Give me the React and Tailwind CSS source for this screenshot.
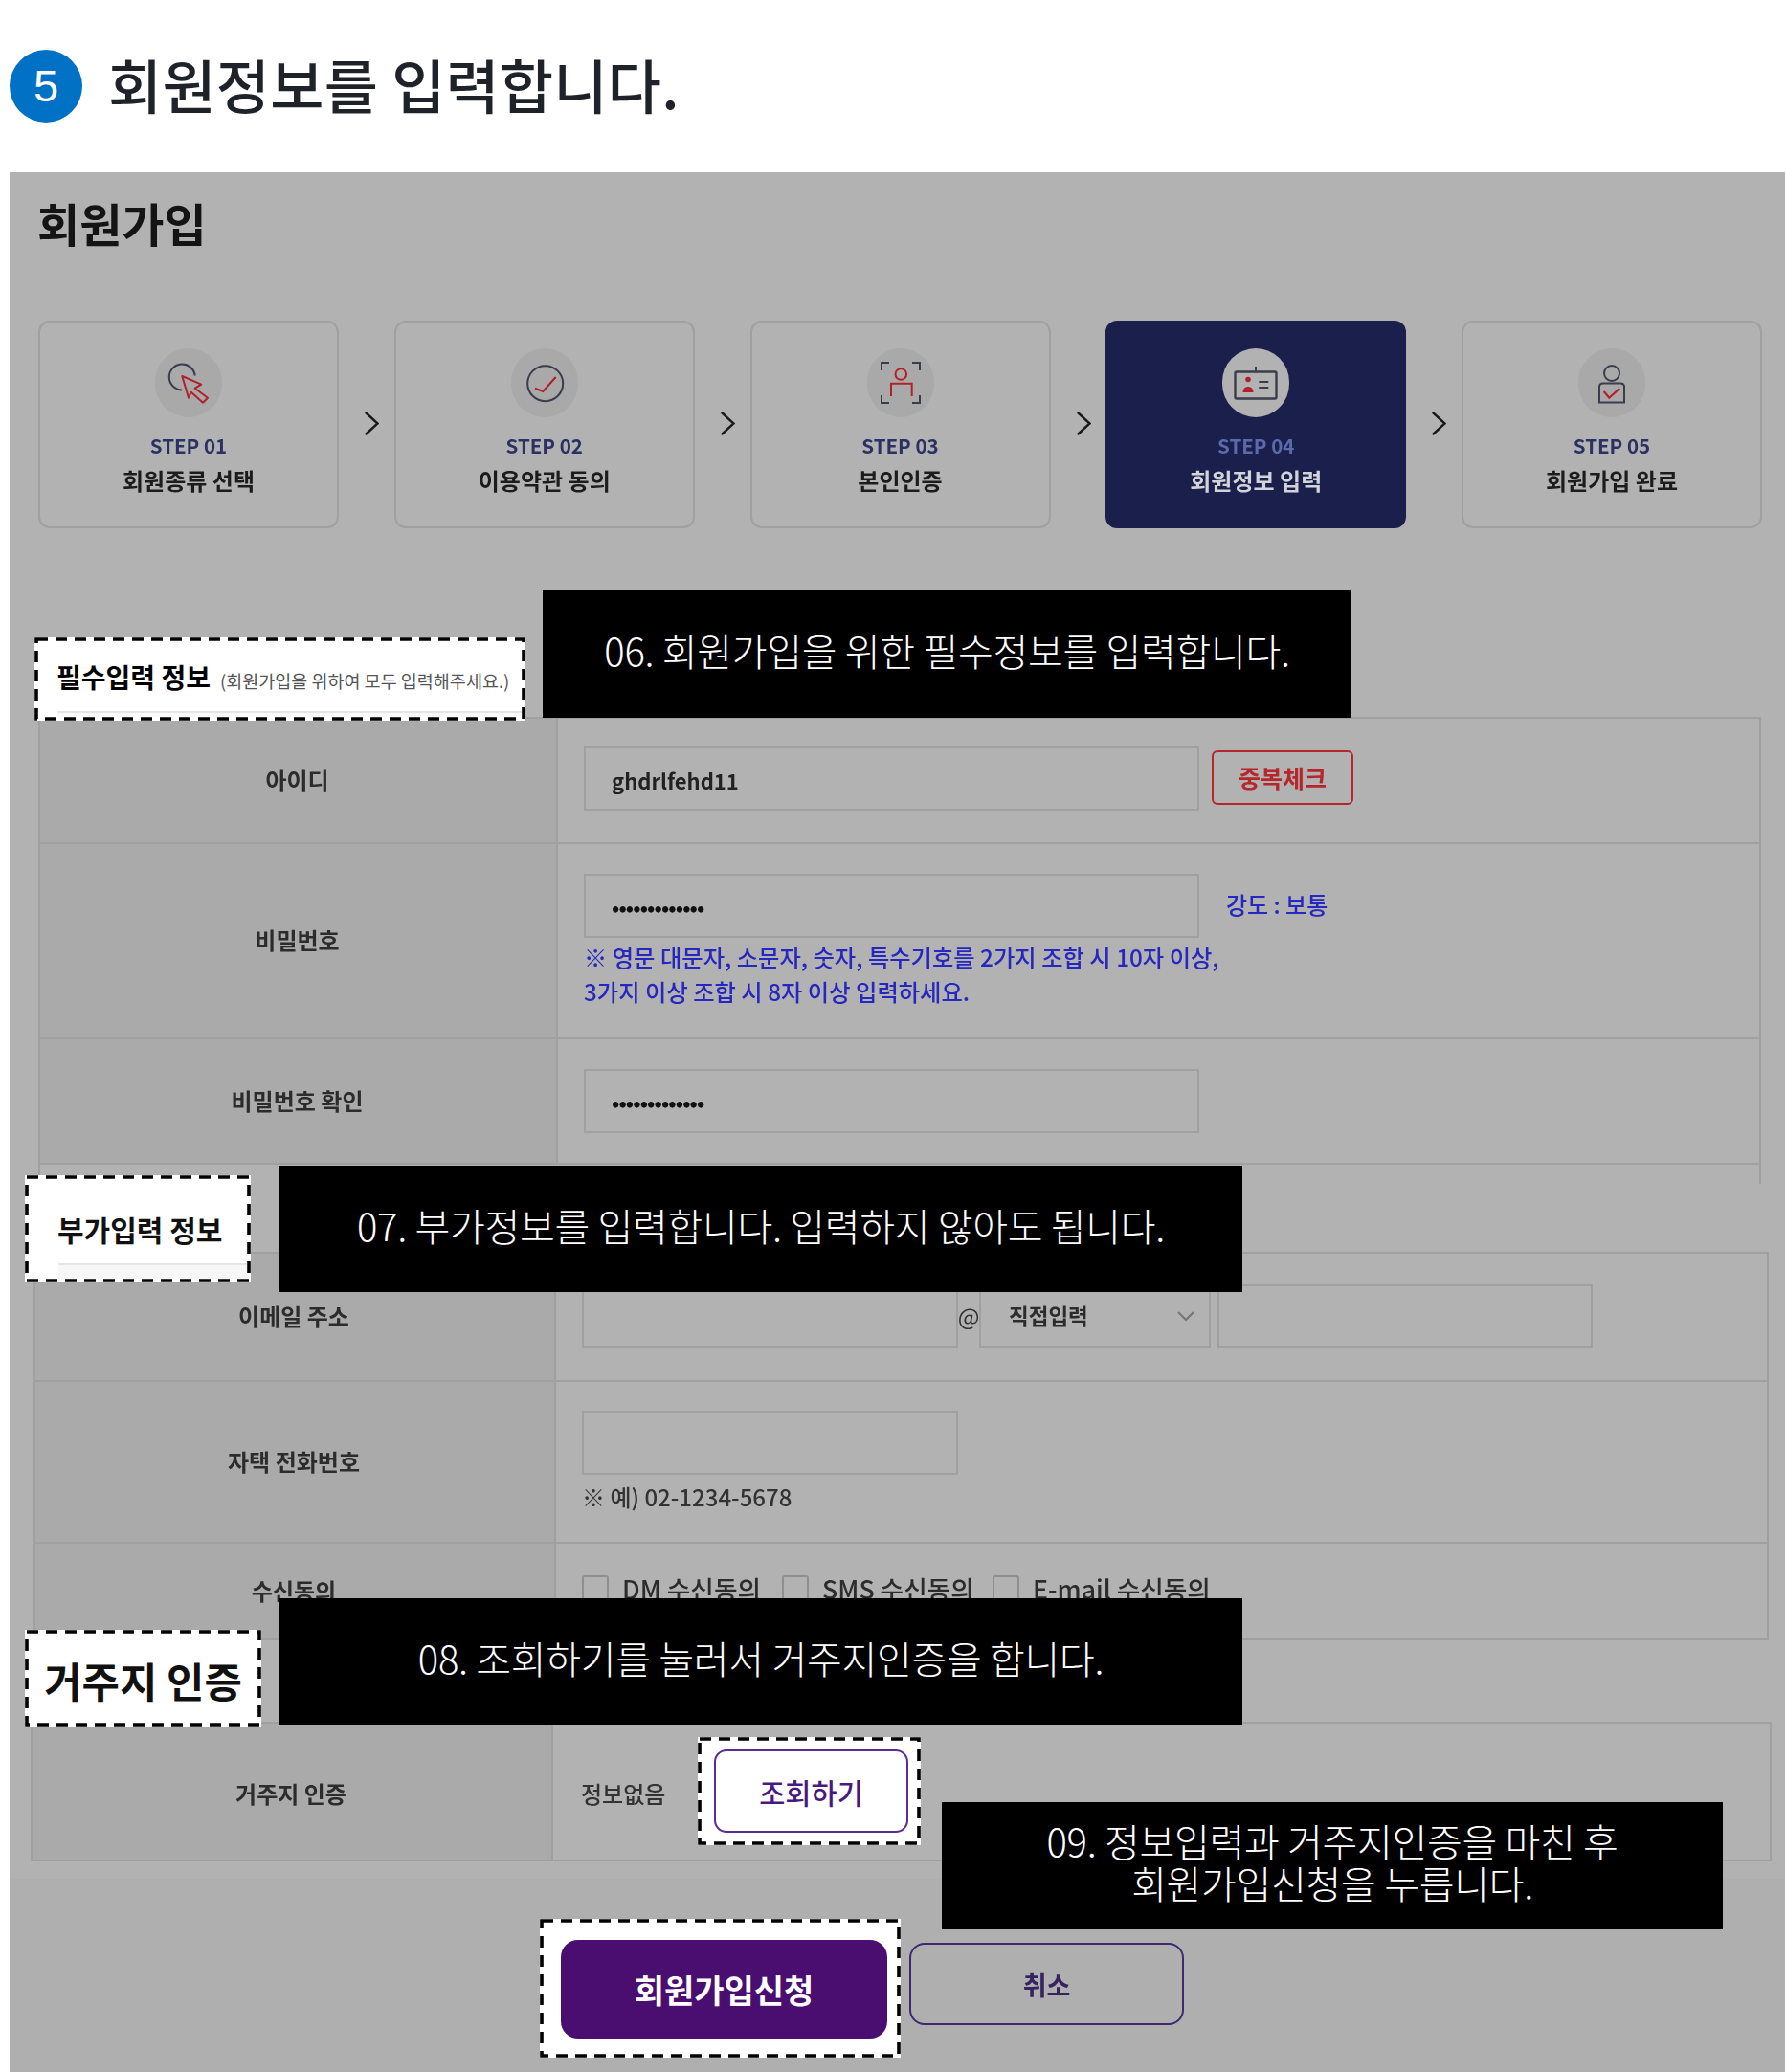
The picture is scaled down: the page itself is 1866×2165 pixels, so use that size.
import React from "react";

const FONT = "font-['Noto_Sans_CJK_KR','Noto_Sans',sans-serif]";

function Chevron() {
  return (
    <svg width="15" height="25" viewBox="0 0 15 25" fill="none" stroke="#1a1a1a" strokeWidth="2.4" strokeLinecap="round">
      <path d="M1.5 1.5 L13.5 12.5 L1.5 23.5" />
    </svg>
  );
}

const DARK = "#3a3d4c";
const RED = "#b3202a";

function Icon({ n }) {
  return (
    <svg width="70" height="72" viewBox="0 0 70 72" fill="none" strokeWidth="2">
      {n === 1 && (
        <>
          <path d="M28 43.5 A13.5 13.5 0 1 1 41.7 28.5" stroke={DARK} />
          <path d="M28.3 29 L48.3 37.7 L41.7 41.7 L55 51.7 L50 56.7 L37.7 45.7 L35 51.7 Z" stroke={RED} strokeLinejoin="round" />
        </>
      )}
      {n === 2 && (
        <>
          <circle cx="35.7" cy="36.7" r="18.5" stroke={DARK} />
          <path d="M25 41.7 L33.3 45 L46.7 30" stroke={RED} />
        </>
      )}
      {n === 3 && (
        <>
          <path d="M15 23 V15 H23 M47 15 H55 V23 M15 49 V57 H23 M47 57 H55 V49" stroke={DARK} />
          <circle cx="35.3" cy="27" r="5.8" stroke={RED} />
          <path d="M25 50 V36.7 H46.7 V50" stroke={RED} />
        </>
      )}
      {n === 4 && (
        <>
          <path d="M35 24 V19" stroke={DARK} />
          <rect x="13.5" y="24.5" width="43" height="28" rx="1.5" stroke={DARK} strokeWidth="2.4" />
          <circle cx="27" cy="32.5" r="2.8" fill={RED} stroke="none" />
          <path d="M21.5 46 C21.5 38 32.5 38 32.5 46 Z" fill={RED} stroke="none" />
          <path d="M38.3 35 H48.3 M38.3 41 H48.3" stroke={DARK} />
        </>
      )}
      {n === 5 && (
        <>
          <circle cx="35" cy="26" r="8" stroke={DARK} />
          <path d="M26 36.5 H44 Q48 36.5 48 40 V56.5 H22 V40 Q22 36.5 26 36.5 Z" stroke={DARK} />
          <path d="M26.7 45 L32.3 51.7 L43.3 41.7" stroke={RED} strokeWidth="2.2" />
        </>
      )}
    </svg>
  );
}

function Step({ n, title, active }) {
  return (
    <div
      className={
        "w-[314px] h-[217px] rounded-[12px] flex flex-col items-center " +
        (active ? "bg-[#1b1f4b]" : "border-2 border-[#a0a0a0]")
      }
    >
      <div
        className={
          "w-[70px] h-[72px] rounded-full flex items-center justify-center " +
          (active ? "mt-[29px] bg-[#b2b2b2]" : "mt-[27px] bg-[#a9a9a9]")
        }
      >
        <Icon n={n} />
      </div>
      <div
        className={
          "mt-[15px] leading-[28px] text-[20.5px] font-bold " +
          (active ? "text-[#5a6bab]" : "text-[#2a3263]")
        }
      >
        STEP 0{n}
      </div>
      <div
        className={
          "mt-[6px] leading-[34px] text-[24px] font-bold " +
          (active ? "text-[#d2d3d8]" : "text-[#1c1c1c]")
        }
      >
        {title}
      </div>
    </div>
  );
}

function Sep() {
  return (
    <div className="w-[57.75px] pl-[27px] pb-[2px] flex items-center">
      <Chevron />
    </div>
  );
}

function Label({ className, children }) {
  return (
    <div className={"shrink-0 h-full bg-[#aaaaaa] border-r-2 border-[#a0a0a0] flex items-center justify-center pb-[2px] pr-[2px] text-[24px] font-bold text-[#2c2c2c] " + className}>
      {children}
    </div>
  );
}

function Field({ className, children }) {
  return (
    <div className={"border-2 border-[#a0a0a0] flex items-center shrink-0 " + className}>{children}</div>
  );
}

const Dots = () => (
  <span className="pl-[27px] text-[22px] leading-none tracking-[-0.9px] text-[#111] font-bold">•••••••••••••</span>
);

function Dashed({ className, w, h, children }) {
  return (
    <div className={"absolute bg-white " + className}>
      <svg className="absolute left-0 top-0" width={w} height={h} fill="none">
        <rect x="2" y="2" width={w - 4} height={h - 4} stroke="#000" strokeWidth="3.6" strokeDasharray="12 8" />
      </svg>
      {children}
    </div>
  );
}

function Note({ className, children }) {
  return (
    <div className={"absolute bg-black text-white text-center flex flex-col justify-center pb-[9px] text-[40px] leading-[44px] font-light tracking-[-0.3px] " + className}>
      {children}
    </div>
  );
}

function Check({ children, className }) {
  return (
    <div className={"flex items-center " + className}>
      <span className="w-[28px] h-[30px] rounded-[3px] border-2 border-[#8f8f8f] shrink-0" />
      <span className="ml-[14px] mb-[2px] text-[26.7px] leading-[28px] text-[#2c2c2c] font-medium">{children}</span>
    </div>
  );
}

export default function App() {
  return (
    <div className={"relative w-[1866px] h-[2165px] bg-white overflow-hidden " + FONT}>
      {/* Heading */}
      <div className="h-[180px] pl-[10px] flex items-center">
        <div className="w-[76px] h-[76px] rounded-full bg-[#0071c5] text-white flex items-center justify-center text-[47px] font-['Liberation_Sans',sans-serif]">
          5
        </div>
        <h1 className="ml-[27px] mb-[4px] text-[61px] leading-[76px] font-medium tracking-[0.3px] text-[#1f2329]">회원정보를 입력합니다.</h1>
      </div>

      {/* Dimmed page */}
      <div className="ml-[10px] w-[1855px] h-[1985px] bg-[#b2b2b2] flex flex-col blur-[0.5px]">
        <div className="h-[155px] pl-[29px] pt-[27px] text-[48px] leading-[50px] font-bold text-[#141414]">회원가입</div>

        <div className="flex ml-[30px]">
          <Step n={1} title="회원종류 선택" />
          <Sep />
          <Step n={2} title="이용약관 동의" />
          <Sep />
          <Step n={3} title="본인인증" />
          <Sep />
          <Step n={4} title="회원정보 입력" active />
          <Sep />
          <Step n={5} title="회원가입 완료" />
        </div>

        {/* Required */}
        <div className="mt-[197px] ml-[30px] w-[1800px] border-t-2 border-x-2 border-[#a0a0a0]">
          <div className="flex h-[131px] border-b-2 border-[#a0a0a0]">
            <Label className="w-[541px]">아이디</Label>
            <div className="pl-[27px] pt-[29px] flex items-start">
              <Field className="w-[643px] h-[67px]">
                <span className="pl-[27px] pt-[3px] text-[22px] font-bold text-[#222]">ghdrlfehd11</span>
              </Field>
              <div className="ml-[13px] mt-[4px] w-[148px] h-[57px] rounded-[6px] border-2 border-[#b5262d] flex items-center justify-center text-[25px] font-bold text-[#b5262d]">
                중복체크
              </div>
            </div>
          </div>
          <div className="flex h-[204px] border-b-2 border-[#a0a0a0]">
            <Label className="w-[541px]">비밀번호</Label>
            <div className="pl-[27px] pt-[31px] flex flex-col">
              <div className="flex items-center">
                <Field className="w-[643px] h-[67px]">
                  <Dots />
                </Field>
                <span className="ml-[28px] mb-[4px] text-[24px] font-medium text-[#2626c0]">강도 : 보통</span>
              </div>
              <div className="mt-[2px] text-[24.3px] leading-[36px] font-medium text-[#2626c0]">
                <div>※ 영문 대문자, 소문자, 숫자, 특수기호를 2가지 조합 시 10자 이상,</div>
                <div>3가지 이상 조합 시 8자 이상 입력하세요.</div>
              </div>
            </div>
          </div>
          <div className="flex h-[131px] border-b-2 border-[#a0a0a0]">
            <Label className="w-[541px]">비밀번호 확인</Label>
            <div className="pl-[27px] pt-[31px]">
              <Field className="w-[643px] h-[67px]">
                <Dots />
              </Field>
            </div>
          </div>
          <div className="h-[20px]" />
        </div>

        {/* Optional */}
        <div className="mt-[71px] ml-[25px] w-[1813px] border-t-2 border-x-2 border-[#a0a0a0]">
          <div className="flex h-[134px] border-b-2 border-[#a0a0a0]">
            <Label className="w-[544px]">이메일 주소</Label>
            <div className="pl-[27px] pt-[32px] flex items-start">
              <Field className="w-[393px] h-[66px]" />
              <span className="w-[22px] h-[66px] flex items-center justify-center text-[24px] text-[#333]">@</span>
              <Field className="w-[242px] h-[66px] justify-between pl-[29px] pr-[14px]">
                <span className="text-[22.5px] font-bold text-[#2c2c2c]">직접입력</span>
                <svg width="20" height="12" viewBox="0 0 20 12" fill="none" stroke="#757575" strokeWidth="2">
                  <path d="M2 2 L10 10 L18 2" />
                </svg>
              </Field>
              <Field className="ml-[7px] w-[392px] h-[66px]" />
            </div>
          </div>
          <div className="flex h-[169px] border-b-2 border-[#a0a0a0]">
            <Label className="w-[544px]">자택 전화번호</Label>
            <div className="pl-[27px] pt-[30px]">
              <Field className="w-[393px] h-[67px]" />
              <div className="mt-[6px] text-[24px] leading-[34px] text-[#333] font-medium">※ 예) 02-1234-5678</div>
            </div>
          </div>
          <div className="flex h-[101px] border-b-2 border-[#a0a0a0]">
            <Label className="w-[544px]">수신동의</Label>
            <div className="pl-[27px] pt-[33px] flex items-start">
              <Check className="w-[209px]">DM 수신동의</Check>
              <Check className="w-[220px]">SMS 수신동의</Check>
              <Check>E-mail 수신동의</Check>
            </div>
          </div>
        </div>

        {/* Residence */}
        <div className="mt-[85px] ml-[22px] w-[1819px] border-t-2 border-x-2 border-[#a0a0a0]">
          <div className="flex h-[144px] border-b-2 border-[#a0a0a0]">
            <Label className="w-[544px]">
              <span className="mt-[5px]">거주지 인증</span>
            </Label>
            <div className="pl-[29px] pt-[3px] flex items-center text-[24px] font-medium text-[#333]">정보없음</div>
          </div>
        </div>

        <div className="mt-[18px] flex-1 bg-[#afafaf] pt-[67px] pl-[940px]">
          <div className="w-[287px] h-[86px] rounded-[16px] border-2 border-[#3c2a6e] flex items-center justify-center pt-[2px] text-[27px] font-bold text-[#36245f]">
            취소
          </div>
        </div>
      </div>

      {/* Highlighted excerpts */}
      <Dashed className="left-[36px] top-[666px] w-[513px] h-[87px]" w={513} h={87}>
        <div className="absolute left-[24px] top-[77px] w-[485px] h-[6px] bg-[#fafafa] border-t-2 border-[#e6e6e6]" />
        <div className="absolute left-[23px] top-[21px] flex items-baseline leading-[40px]">
          <span className="text-[28px] font-bold text-black">필수입력 정보</span>
          <span className="ml-[10px] text-[18.5px] text-[#555]">(회원가입을 위하여 모두 입력해주세요.)</span>
        </div>
      </Dashed>
      <Dashed className="left-[26px] top-[1228px] w-[236px] h-[112px]" w={236} h={112}>
        <div className="absolute left-[35px] top-[92px] w-[197px] h-[16px] bg-[#f7f7f7] border-t-2 border-[#e6e6e6]" />
        <div className="absolute left-[34px] top-[35px] text-[30px] leading-[42px] font-bold text-[#111]">부가입력 정보</div>
      </Dashed>
      <Dashed className="left-[26px] top-[1703px] w-[247px] h-[101px] flex items-center justify-center" w={247} h={101}>
        <span className="relative mt-[2px] text-[42.8px] leading-[50px] font-bold text-[#111]">거주지 인증</span>
      </Dashed>
      <Dashed className="left-[729px] top-[1815px] w-[233px] h-[113px]" w={233} h={113}>
        <div className="absolute left-[17px] top-[13px] w-[203px] h-[87px] rounded-[13px] border-2 border-[#5b2d91] flex items-center justify-center pt-[2px] text-[29.5px] font-medium text-[#481a80]">
          조회하기
        </div>
      </Dashed>
      <Dashed className="left-[564px] top-[2005px] w-[377px] h-[145px]" w={377} h={145}>
        <div className="absolute left-[22px] top-[22px] w-[341px] h-[103px] rounded-[18px] bg-[#4a0e70] flex items-center justify-center text-[34px] font-bold text-white">
          회원가입신청
        </div>
      </Dashed>

      <Note className="left-[567px] top-[617px] w-[845px] h-[133px]">06. 회원가입을 위한 필수정보를 입력합니다.</Note>
      <Note className="left-[292px] top-[1218px] w-[1006px] h-[132px]">07. 부가정보를 입력합니다. 입력하지 않아도 됩니다.</Note>
      <Note className="left-[292px] top-[1670px] w-[1006px] h-[132px]">08. 조회하기를 눌러서 거주지인증을 합니다.</Note>
      <Note className="left-[984px] top-[1883px] w-[816px] h-[133px]">
        <div>09. 정보입력과 거주지인증을 마친 후</div>
        <div>회원가입신청을 누릅니다.</div>
      </Note>
    </div>
  );
}
